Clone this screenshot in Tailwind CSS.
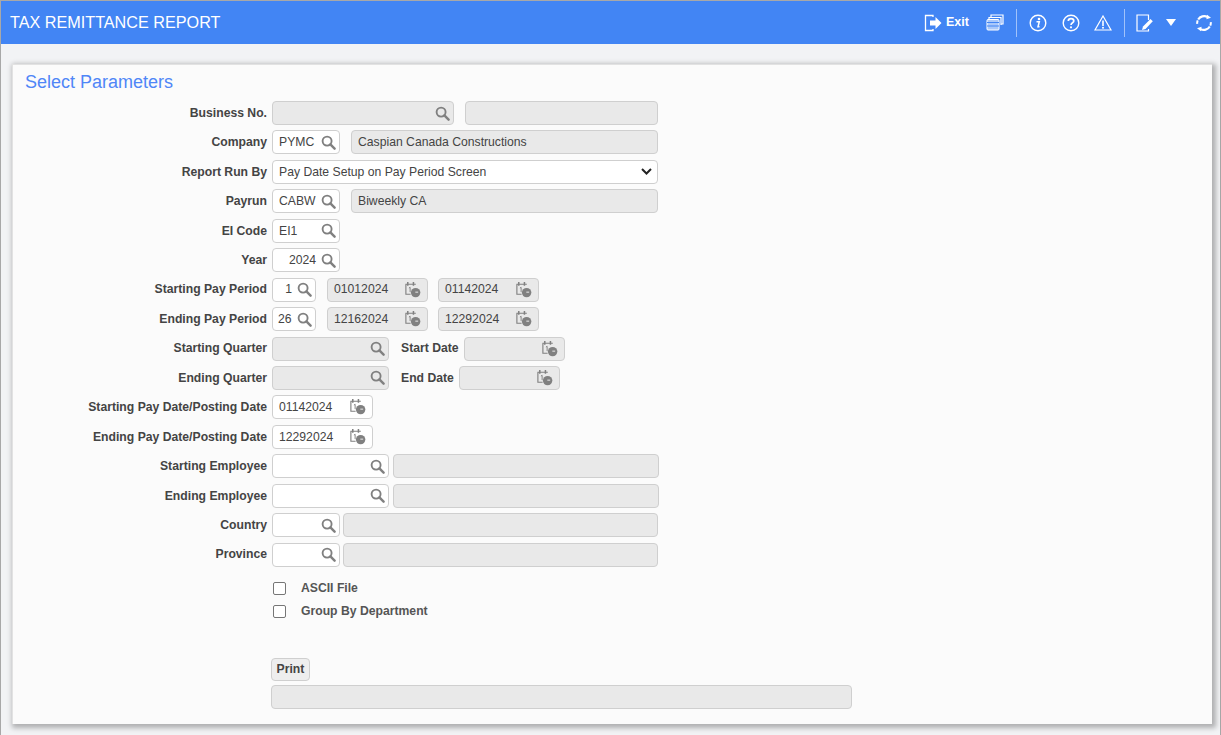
<!DOCTYPE html>
<html>
<head>
<meta charset="utf-8">
<script src="https://cdn.jsdelivr.net/npm/@tailwindcss/browser@4"></script>
</head>
<body class="w-[1221px] h-[735px] overflow-hidden bg-[#f2f3f5] font-['Liberation_Sans',Arial,sans-serif] text-[12.2px] text-[#444]">
<svg width="0" height="0" class="absolute">
  <defs>
    <symbol id="s" viewBox="0 0 16 16"><circle cx="6.500" cy="6.500" r="4.800" fill="none" stroke="#808080" stroke-width="2"/><path d="M10 10l4.500 4.500" stroke="#808080" stroke-width="2.600" stroke-linecap="round"/></symbol>
    <symbol id="c" viewBox="0 0 18 18"><path d="M1.500 3.500h11M2 3.500v10.500h5" fill="none" stroke="#808080" stroke-width="1.200"/><path d="M4 1v4M10 1v4" stroke="#808080" stroke-width="1.600"/><path d="M5.200 7.500l1.300-.8v5" fill="none" stroke="#808080" stroke-width="1"/><circle cx="12.300" cy="12.300" r="5" fill="#808080"/><path d="M12 11.800h3" stroke="#eee" stroke-width="1"/></symbol>
  </defs>
</svg>
<div class="h-full border-t border-l border-r border-[#a8a8a8] flex flex-col">
  <header class="h-[43px] shrink-0 bg-[#4285f4] flex items-center justify-between pl-[9px] text-white">
    <h1 class="text-[16.200px] font-normal">TAX REMITTANCE REPORT</h1>
    <div class="flex items-center">
      <svg width="19" height="18" viewBox="0 0 19 18" fill="none" class="mr-[2px]"><path d="M9 3V1.500H1.500v15H9V15" stroke="#fff" stroke-width="1.300"/><path d="M6 6.500h5.500V3l6 6-6 6v-3.500H6z" fill="#fff"/></svg>
      <span class="text-[12.500px] font-bold w-[24px] ml-[1px]">Exit</span>
      <svg width="18" height="17" viewBox="0 0 18 17" class="ml-[16px]" fill="none" stroke="#fff"><path d="M5 3.500V1h12v9h-2" stroke-width="1.200"/><path d="M3 5V3.500h12V11" stroke-width="1.200"/><rect x="1" y="5.500" width="12" height="10.500" rx="1" fill="#fff" fill-opacity=".55" stroke-width="1"/><path d="M1 8.500h12M1 12h12" stroke="#4285f4" stroke-width="1"/></svg>
      <div class="w-px h-[28px] bg-white/50 ml-[12px]"></div>
      <svg width="18" height="18" viewBox="0 0 18 18" class="ml-[12px]" fill="none"><circle cx="9" cy="9" r="7.800" stroke="#fff" stroke-width="1.400"/><circle cx="10" cy="5" r="1.300" fill="#fff"/><path d="M7.500 7.800h2.800l-1.300 5h1.500" stroke="#fff" stroke-width="1.500"/></svg>
      <svg width="18" height="18" viewBox="0 0 18 18" class="ml-[15px]" fill="none"><circle cx="9" cy="9" r="7.800" stroke="#fff" stroke-width="1.400"/><path d="M6.300 7C6.300 3.800 11.800 3.800 11.800 7C11.800 8.800 9 8.800 9 11" stroke="#fff" stroke-width="1.700"/><circle cx="9" cy="13.300" r="1.100" fill="#fff"/></svg>
      <svg width="18" height="16" viewBox="0 0 18 16" class="ml-[14px]" fill="none"><path d="M9 1L1 15h16z" stroke="#fff" stroke-width="1.200"/><path d="M9 5.500v5.500" stroke="#fff" stroke-width="1.600"/><circle cx="9" cy="12.800" r="1" fill="#fff"/></svg>
      <div class="w-px h-[28px] bg-white/50 ml-[12px]"></div>
      <svg width="18" height="18" viewBox="0 0 18 18" class="ml-[11px]" fill="none"><path d="M12.500 6V1H1v16h11.500v-2" stroke="#fff" stroke-width="1.200"/><path d="M6 16l1-3.500L14.500 5l2.300 2.300L9.500 15z" fill="#fff"/></svg>
      <svg width="10" height="7" viewBox="0 0 10 7" class="ml-[12px]"><path d="M0 0h10L5 7z" fill="#fff"/></svg>
      <svg width="18" height="18" viewBox="0 0 18 18" class="ml-[19px] mr-[7px]" fill="none"><path d="M3.200 5.500A7 7 0 0 1 12.500 2.900M14.800 12.500A7 7 0 0 1 5.500 15.100" stroke="#fff" stroke-width="2.200"/><path d="M15.800 8.200a7 7 0 0 1-.5 3.500M2.200 9.800a7 7 0 0 1 .5-3.500" stroke="#fff" stroke-width="2"/><path d="M12 0.800l4 3-4.600 1.500zM6 17.200l-4-3 4.600-1.500z" fill="#fff"/></svg>
    </div>
  </header>
  <main class="ml-[11px] mr-[8px] mt-[20px] h-[660px] bg-[#fbfbfb] border-t border-l border-[#e2e2e2] shadow-[2px_2px_5px_2px_rgba(0,0,0,0.28)] pl-[12px] relative">
    <h2 class="text-[18px] leading-[21px] font-normal text-[#4f86f7] pt-[7px] h-[29px] box-content">Select Parameters</h2>
    <div class="-ml-[12px] flex flex-col gap-[5.450px] font-bold">

      <div class="flex items-center h-6"><label class="w-[254px] text-right">Business No.</label>
        <div class="ml-[5px] w-[182px] h-6 rounded-[4px] border border-[#cfcfcf] bg-[#e9e9e9] flex items-center justify-end pr-[3px]"><svg class="w-[15px] h-[15px]"><use href="#s"/></svg></div>
        <div class="ml-[11px] w-[193px] h-6 rounded-[4px] border border-[#cfcfcf] bg-[#e9e9e9]"></div></div>

      <div class="flex items-center h-6"><label class="w-[254px] text-right">Company</label>
        <div class="ml-[5px] w-[68px] h-6 rounded-[4px] border border-[#cfcfcf] bg-white flex items-center justify-between pl-[6px] pr-[3px] font-normal"><span>PYMC</span><svg class="w-[15px] h-[15px]"><use href="#s"/></svg></div>
        <div class="ml-[11px] w-[307px] h-6 rounded-[4px] border border-[#cfcfcf] bg-[#e9e9e9] flex items-center px-[6px] font-normal">Caspian Canada Constructions</div></div>

      <div class="flex items-center h-6"><label class="w-[254px] text-right">Report Run By</label>
        <div class="ml-[5px] w-[386px] h-6 rounded-[4px] border border-[#cfcfcf] bg-white flex items-center justify-between px-[6px] pr-[5px] font-normal"><span>Pay Date Setup on Pay Period Screen</span><svg width="11" height="7" viewBox="0 0 11 7" fill="none"><path d="M1 1l4.500 4.500L10 1" stroke="#222" stroke-width="2"/></svg></div></div>

      <div class="flex items-center h-6"><label class="w-[254px] text-right">Payrun</label>
        <div class="ml-[5px] w-[68px] h-6 rounded-[4px] border border-[#cfcfcf] bg-white flex items-center justify-between pl-[6px] pr-[3px] font-normal"><span>CABW</span><svg class="w-[15px] h-[15px]"><use href="#s"/></svg></div>
        <div class="ml-[11px] w-[307px] h-6 rounded-[4px] border border-[#cfcfcf] bg-[#e9e9e9] flex items-center px-[6px] font-normal">Biweekly CA</div></div>

      <div class="flex items-center h-6"><label class="w-[254px] text-right">EI Code</label>
        <div class="ml-[5px] w-[68px] h-6 rounded-[4px] border border-[#cfcfcf] bg-white flex items-center justify-between pl-[6px] pr-[3px] font-normal"><span>EI1</span><svg class="w-[15px] h-[15px]"><use href="#s"/></svg></div></div>

      <div class="flex items-center h-6"><label class="w-[254px] text-right">Year</label>
        <div class="ml-[5px] w-[68px] h-6 rounded-[4px] border border-[#cfcfcf] bg-white flex items-center justify-end gap-[5px] pr-[3px] font-normal"><span>2024</span><svg class="w-[15px] h-[15px]"><use href="#s"/></svg></div></div>

      <div class="flex items-center h-6"><label class="w-[254px] text-right">Starting Pay Period</label>
        <div class="ml-[5px] w-[44px] h-6 rounded-[4px] border border-[#cfcfcf] bg-white flex items-center justify-end gap-[5px] pr-[3px] font-normal"><span>1</span><svg class="w-[15px] h-[15px]"><use href="#s"/></svg></div>
        <div class="ml-[11px] w-[101px] h-6 rounded-[4px] border border-[#cfcfcf] bg-[#e9e9e9] flex items-center justify-between pl-[6px] pr-[6px] font-normal"><span>01012024</span><svg class="w-[17px] h-[17px] -mt-[1px]"><use href="#c"/></svg></div>
        <div class="ml-[10px] w-[101px] h-6 rounded-[4px] border border-[#cfcfcf] bg-[#e9e9e9] flex items-center justify-between pl-[6px] pr-[6px] font-normal"><span>01142024</span><svg class="w-[17px] h-[17px] -mt-[1px]"><use href="#c"/></svg></div></div>

      <div class="flex items-center h-6"><label class="w-[254px] text-right">Ending Pay Period</label>
        <div class="ml-[5px] w-[44px] h-6 rounded-[4px] border border-[#cfcfcf] bg-white flex items-center justify-between pl-[5px] pr-[3px] font-normal"><span>26</span><svg class="w-[15px] h-[15px]"><use href="#s"/></svg></div>
        <div class="ml-[11px] w-[101px] h-6 rounded-[4px] border border-[#cfcfcf] bg-[#e9e9e9] flex items-center justify-between pl-[6px] pr-[6px] font-normal"><span>12162024</span><svg class="w-[17px] h-[17px] -mt-[1px]"><use href="#c"/></svg></div>
        <div class="ml-[10px] w-[101px] h-6 rounded-[4px] border border-[#cfcfcf] bg-[#e9e9e9] flex items-center justify-between pl-[6px] pr-[6px] font-normal"><span>12292024</span><svg class="w-[17px] h-[17px] -mt-[1px]"><use href="#c"/></svg></div></div>

      <div class="flex items-center h-6"><label class="w-[254px] text-right">Starting Quarter</label>
        <div class="ml-[5px] w-[117px] h-6 rounded-[4px] border border-[#cfcfcf] bg-[#e9e9e9] flex items-center justify-end pr-[3px]"><svg class="w-[15px] h-[15px]"><use href="#s"/></svg></div>
        <label class="ml-[12px] w-[63px]">Start Date</label>
        <div class="w-[101px] h-6 rounded-[4px] border border-[#cfcfcf] bg-[#e9e9e9] flex items-center justify-end pr-[6px]"><svg class="w-[17px] h-[17px] -mt-[1px]"><use href="#c"/></svg></div></div>

      <div class="flex items-center h-6"><label class="w-[254px] text-right">Ending Quarter</label>
        <div class="ml-[5px] w-[117px] h-6 rounded-[4px] border border-[#cfcfcf] bg-[#e9e9e9] flex items-center justify-end pr-[3px]"><svg class="w-[15px] h-[15px]"><use href="#s"/></svg></div>
        <label class="ml-[12px] w-[58px]">End Date</label>
        <div class="w-[101px] h-6 rounded-[4px] border border-[#cfcfcf] bg-[#e9e9e9] flex items-center justify-end pr-[6px]"><svg class="w-[17px] h-[17px] -mt-[1px]"><use href="#c"/></svg></div></div>

      <div class="flex items-center h-6"><label class="w-[254px] text-right">Starting Pay Date/Posting Date</label>
        <div class="ml-[5px] w-[101px] h-6 rounded-[4px] border border-[#cfcfcf] bg-white flex items-center justify-between pl-[6px] pr-[6px] font-normal"><span>01142024</span><svg class="w-[17px] h-[17px] -mt-[1px]"><use href="#c"/></svg></div></div>

      <div class="flex items-center h-6"><label class="w-[254px] text-right">Ending Pay Date/Posting Date</label>
        <div class="ml-[5px] w-[101px] h-6 rounded-[4px] border border-[#cfcfcf] bg-white flex items-center justify-between pl-[6px] pr-[6px] font-normal"><span>12292024</span><svg class="w-[17px] h-[17px] -mt-[1px]"><use href="#c"/></svg></div></div>

      <div class="flex items-center h-6"><label class="w-[254px] text-right">Starting Employee</label>
        <div class="ml-[5px] w-[117px] h-6 rounded-[4px] border border-[#cfcfcf] bg-white flex items-center justify-end pr-[3px]"><svg class="w-[15px] h-[15px]"><use href="#s"/></svg></div>
        <div class="ml-[4px] w-[266px] h-6 rounded-[4px] border border-[#cfcfcf] bg-[#e9e9e9]"></div></div>

      <div class="flex items-center h-6"><label class="w-[254px] text-right">Ending Employee</label>
        <div class="ml-[5px] w-[117px] h-6 rounded-[4px] border border-[#cfcfcf] bg-white flex items-center justify-end pr-[3px]"><svg class="w-[15px] h-[15px]"><use href="#s"/></svg></div>
        <div class="ml-[4px] w-[266px] h-6 rounded-[4px] border border-[#cfcfcf] bg-[#e9e9e9]"></div></div>

      <div class="flex items-center h-6"><label class="w-[254px] text-right">Country</label>
        <div class="ml-[5px] w-[68px] h-6 rounded-[4px] border border-[#cfcfcf] bg-white flex items-center justify-end pr-[3px]"><svg class="w-[15px] h-[15px]"><use href="#s"/></svg></div>
        <div class="ml-[3px] w-[315px] h-6 rounded-[4px] border border-[#cfcfcf] bg-[#e9e9e9]"></div></div>

      <div class="flex items-center h-6"><label class="w-[254px] text-right">Province</label>
        <div class="ml-[5px] w-[68px] h-6 rounded-[4px] border border-[#cfcfcf] bg-white flex items-center justify-end pr-[3px]"><svg class="w-[15px] h-[15px]"><use href="#s"/></svg></div>
        <div class="ml-[3px] w-[315px] h-6 rounded-[4px] border border-[#cfcfcf] bg-[#e9e9e9]"></div></div>
    </div>

    <div class="ml-[248px] mt-[15px] flex flex-col gap-[10px] font-bold text-[#555]">
      <div class="flex items-center h-[13px]"><span class="w-[13px] h-[13px] rounded-[2px] border border-[#767676] bg-white"></span><span class="ml-[15px]">ASCII File</span></div>
      <div class="flex items-center h-[13px]"><span class="w-[13px] h-[13px] rounded-[2px] border border-[#767676] bg-white"></span><span class="ml-[15px]">Group By Department</span></div>
    </div>
    <button class="ml-[246px] mt-[40px] block w-[39px] h-[23px] rounded-[4px] border border-[#cfcfcf] bg-[#eeeeee] text-[12.200px] font-bold text-[#444]">Print</button>
    <div class="ml-[246px] mt-[4px] w-[581px] h-[24px] rounded-[4px] border border-[#cfcfcf] bg-[#e9e9e9]"></div>
  </main>
</div>
</body>
</html>
